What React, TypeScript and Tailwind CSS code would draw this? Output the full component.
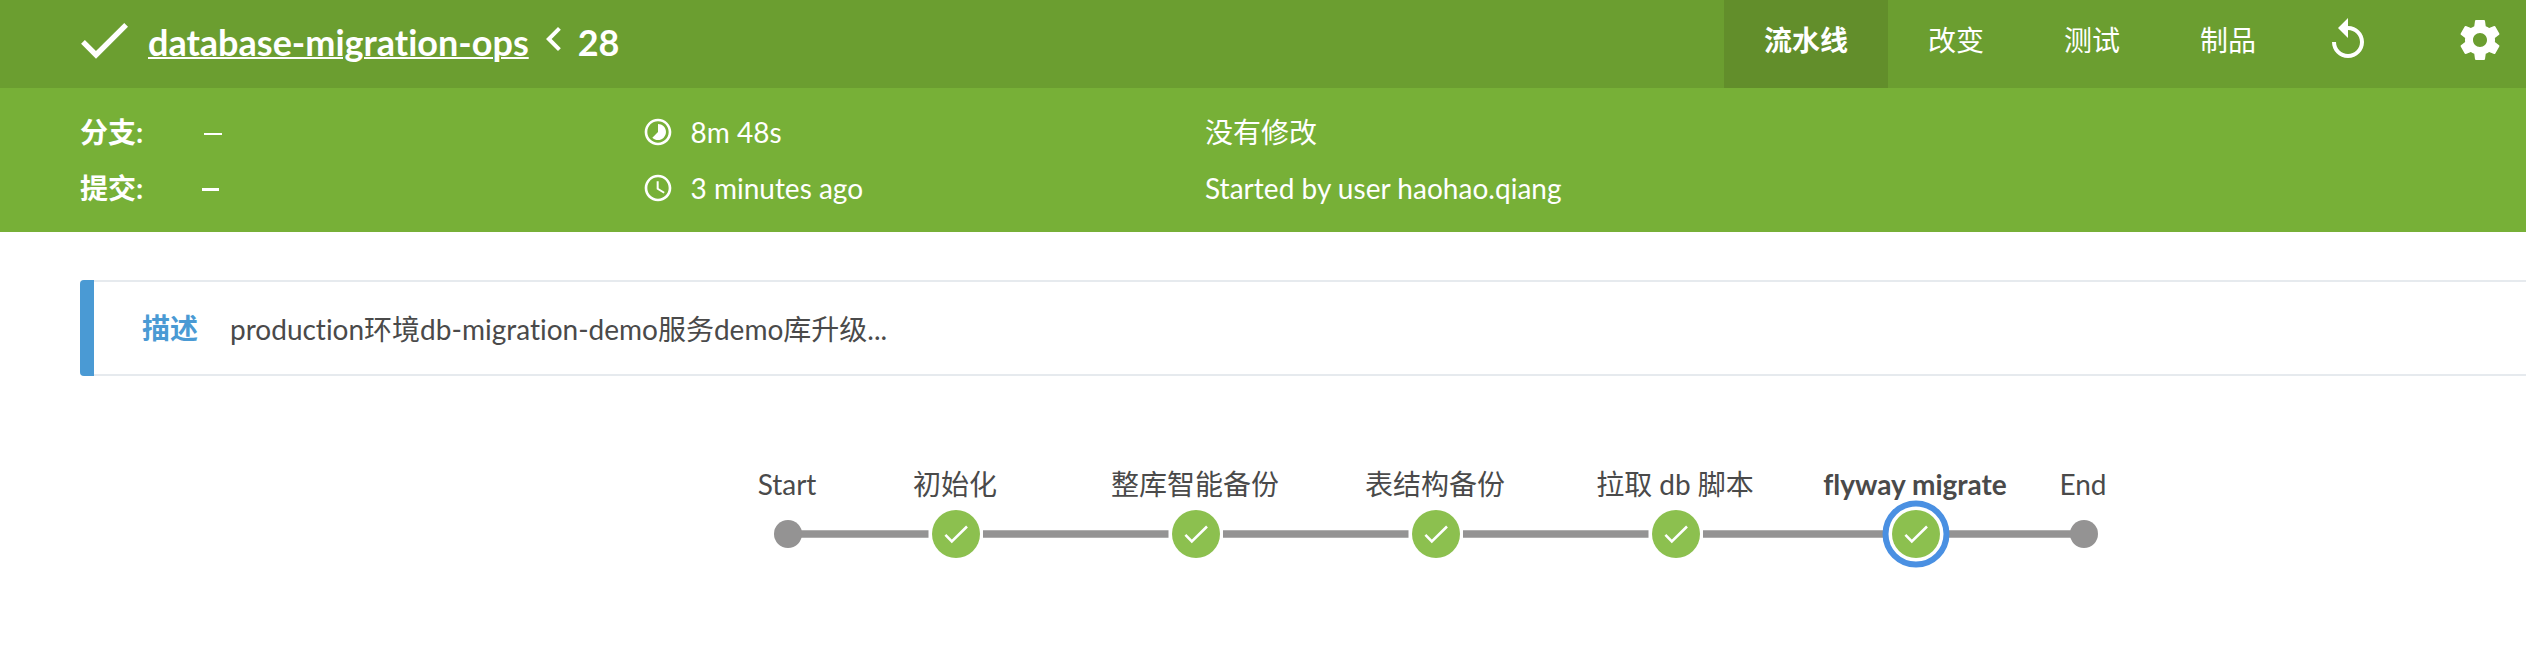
import React from "react";

const tabs = ["改变", "测试", "制品"];

const stages = [
  { label: "初始化", x: 956 },
  { label: "整库智能备份", x: 1196 },
  { label: "表结构备份", x: 1436 },
  { label: "拉取 db 脚本", x: 1676 },
  { label: "flyway migrate", x: 1916, selected: true },
];

const segments = [
  [796, 928.5],
  [983, 1168.5],
  [1223, 1408.5],
  [1463, 1648.5],
  [1703, 1886],
  [1946, 2076],
];

function Icon({ d, className }: { d: string; className: string }) {
  return (
    <svg viewBox="0 0 24 24" fill="currentColor" className={`shrink-0 ${className}`}>
      <path d={d} />
    </svg>
  );
}

function Header() {
  return (
    <header className="flex h-[88px] items-start bg-[#6b9e30]">
      <Icon className="ml-[72px] mt-2 size-16" d="M9 16.17L4.83 12l-1.42 1.41L9 19 21 7l-1.41-1.41z" />
      <h1 className="ml-3 flex items-start text-[36px] leading-[44px] font-bold">
        <a className="mt-5 underline decoration-2">database-migration-ops</a>
        <Icon className="ml-px mt-[15px] size-12" d="M15.41 7.41L14 6l-6 6 6 6 1.41-1.41L10.83 12z" />
        <span className="mt-5">28</span>
      </h1>
      <nav className="ml-auto flex h-full text-[28px] leading-[80px]">
        <a className="h-full bg-[#628e2b] px-10 font-bold">流水线</a>
        {tabs.map((t) => (
          <a key={t} className="px-10">{t}</a>
        ))}
      </nav>
      <Icon
        className="ml-7 mt-4 size-12"
        d="M12 5V1L7 6l5 5V7c3.31 0 6 2.69 6 6s-2.69 6-6 6-6-2.69-6-6H4c0 4.42 3.58 8 8 8s8-3.58 8-8-3.58-8-8-8z"
      />
      <Icon
        className="ml-[84px] mr-[22px] mt-4 size-12"
        d="M19.43 12.98c.04-.32.07-.64.07-.98s-.03-.66-.07-.98l2.11-1.65c.19-.15.24-.42.12-.64l-2-3.46c-.12-.22-.39-.3-.61-.22l-2.49 1c-.52-.4-1.08-.73-1.69-.98l-.38-2.65C14.46 2.18 14.25 2 14 2h-4c-.25 0-.46.18-.49.42l-.38 2.65c-.61.25-1.17.59-1.69.98l-2.49-1c-.23-.09-.49 0-.61.22l-2 3.46c-.13.22-.07.49.12.64l2.11 1.65c-.04.32-.07.65-.07.98s.03.66.07.98l-2.11 1.65c-.19.15-.24.42-.12.64l2 3.46c.12.22.39.3.61.22l2.49-1c.52.4 1.08.73 1.69.98l.38 2.65c.03.24.24.42.49.42h4c.25 0 .46-.18.49-.42l.38-2.65c.61-.25 1.17-.59 1.69-.98l2.49 1c.23.09.49 0 .61-.22l2-3.46c.12-.22.07-.49-.12-.64l-2.11-1.65zM12 15.5c-1.93 0-3.5-1.57-3.5-3.5s1.57-3.5 3.5-3.5 3.5 1.57 3.5 3.5-1.57 3.5-3.5 3.5z"
      />
    </header>
  );
}

function Details() {
  return (
    <section className="flex h-36 bg-[#77b037] pl-20 pt-4 text-[28px] leading-[56px]">
      <div className="w-[562px]">
        <div className="flex items-center">
          <span className="w-[124px] font-bold">分支:</span>
          <span className="mt-[3px] h-0.5 w-[18px] bg-white" />
        </div>
        <div className="flex items-center">
          <span className="w-[122px] font-bold">提交:</span>
          <span className="mt-[3px] h-[3px] w-[17px] bg-white" />
        </div>
      </div>
      <div className="w-[563px]">
        <div className="flex items-center gap-[16.5px]">
          <Icon
            className="size-8"
            d="M16.24 7.76C15.07 6.59 13.54 6 12 6v6l-4.24 4.24c2.34 2.34 6.14 2.34 8.49 0 2.34-2.34 2.34-6.14-.01-8.48zM12 2C6.48 2 2 6.48 2 12s4.48 10 10 10 10-4.48 10-10S17.52 2 12 2zm0 18c-4.42 0-8-3.58-8-8s3.58-8 8-8 8 3.58 8 8-3.58 8-8 8z"
          />
          <span>8m 48s</span>
        </div>
        <div className="flex items-center gap-[16.5px]">
          <Icon
            className="size-8"
            d="M11.99 2C6.47 2 2 6.48 2 12s4.47 10 9.99 10C17.52 22 22 17.52 22 12S17.52 2 11.99 2zM12 20c-4.42 0-8-3.58-8-8s3.58-8 8-8 8 3.58 8 8-3.58 8-8 8zm.5-13H11v6l5.25 3.15.75-1.23-4.5-2.67z"
          />
          <span>3 minutes ago</span>
        </div>
      </div>
      <div>
        <div>没有修改</div>
        <div className="tracking-[0.03px]">Started by user haohao.qiang</div>
      </div>
    </section>
  );
}

function Description() {
  return (
    <section className="ml-20 mt-12 flex h-24 rounded-l-[4px] border-y-2 border-[#e6eaee] text-[28px]">
      <div className="-my-0.5 w-3.5 shrink-0 rounded-l-[4px] bg-[#4a9ad4]" />
      <div className="ml-12 leading-[92px] font-bold text-[#4a9ad4]">描述</div>
      <div className="ml-8 leading-[95px]">production环境db-migration-demo服务demo库升级...</div>
    </section>
  );
}

function Label({ x, bold, children }: { x: number; bold?: boolean; children: React.ReactNode }) {
  return (
    <span
      className={`absolute top-[88px] -translate-x-1/2 whitespace-nowrap leading-10 ${bold ? "font-bold" : ""}`}
      style={{ left: x }}
    >
      {children}
    </span>
  );
}

function PipelineGraph() {
  return (
    <section className="relative h-[294px] text-[28px]">
      <svg viewBox="0 376 2526 294" className="block h-[294px] w-[2526px]">
        {segments.map(([a, b]) => (
          <line key={a} x1={a} x2={b} y1="534" y2="534" stroke="#949393" strokeWidth="7.4" />
        ))}
        <circle cx="788" cy="534" r="14" fill="#949393" />
        <circle cx="2084" cy="534" r="14" fill="#949393" />
        {stages.map((s) => (
          <g key={s.x} transform={`translate(${s.x} 534)`}>
            {s.selected && <circle r="30.5" fill="#fff" stroke="#4a90e2" strokeWidth="6" />}
            <circle r="24" fill="#8cc04f" />
            <path d="M-10.6 .9L-4.2 7.4 11 -7.5" fill="none" stroke="#fff" strokeWidth="2.6" />
          </g>
        ))}
      </svg>
      <Label x={787}>Start</Label>
      {stages.map((s) => (
        <Label key={s.x} x={s.x - 1} bold={s.selected}>{s.label}</Label>
      ))}
      <Label x={2083}>End</Label>
    </section>
  );
}

export default function App() {
  return (
    <main className="h-[670px] w-[2526px] overflow-hidden bg-white font-['Lato','Noto_Sans_CJK_SC',sans-serif] text-[#4a4a4a] [font-variant-ligatures:none]">
      <div className="text-white">
        <Header />
        <Details />
      </div>
      <Description />
      <PipelineGraph />
    </main>
  );
}
